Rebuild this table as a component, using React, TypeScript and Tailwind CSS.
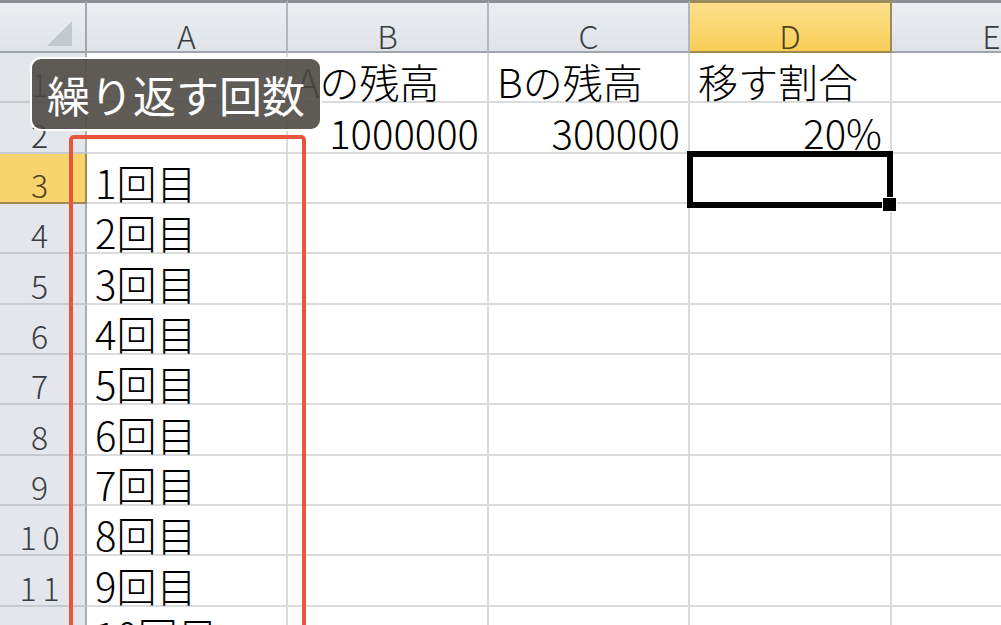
import React from "react";

const COLS = ["A", "B", "C", "D", "E"];

type Cell = { text: string; right?: boolean };

const rows: Cell[][] = [
  [{ text: "" }, { text: "Aの残高" }, { text: "Bの残高" }, { text: "移す割合" }, { text: "" }],
  [{ text: "" }, { text: "1000000", right: true }, { text: "300000", right: true }, { text: "20%", right: true }, { text: "" }],
  ...Array.from({ length: 10 }, (_, i) => [
    { text: `${i + 1}回目` },
    { text: "" },
    { text: "" },
    { text: "" },
    { text: "" },
  ]),
];

const font = { fontFamily: '"Noto Sans CJK JP", "Noto Sans", sans-serif' };

export default function App() {
  return (
    <div className="relative w-[1001px] h-[625px] overflow-hidden bg-white" style={font}>
      <div className="grid w-max grid-cols-[87px_201px_201px_201px_202px_201px] grid-rows-[53px_repeat(12,50.33px)]">
        {/* ── corner ── */}
        <div className="relative border-t-[3px] border-[#8c8f93] border-b-2 border-b-[#9ea4ab] border-r-2 border-r-[#a3a8ae] bg-gradient-to-b from-[#eceef1] to-[#dfe3e8]">
          <svg className="absolute left-[47px] top-[18px]" width="26" height="25" viewBox="0 0 26 25">
            <polygon points="25,0 25,25 0,25" fill="#c3c8ce" />
          </svg>
        </div>

        {/* ── column headers ── */}
        {COLS.map((c) => {
          const sel = c === "D";
          return (
            <div
              key={c}
              className={`flex items-end justify-center border-t-[3px] border-b-2 border-r-2 text-[32px] leading-none ${
                sel
                  ? "border-t-[#9a8a5e] border-b-[#a08a52] border-r-[#9b8b5c] bg-gradient-to-b from-[#fde18c] to-[#f9cd55] text-[#4d4120]"
                  : "border-t-[#8c8f93] border-b-[#9ea4ab] border-r-[#b2b7bd] bg-gradient-to-b from-[#eceef1] to-[#dfe3e8] text-[#3a3d40]"
              }`}
            >
              <span className="font-light">{c}</span>
            </div>
          );
        })}

        {/* ── body rows ── */}
        {rows.map((row, ri) => {
          const n = ri + 1;
          const sel = n === 3;
          return (
            <React.Fragment key={n}>
              <div
                className={`flex items-end justify-center pr-[6px] pb-[2px] border-b-2 border-r-2 text-[32px] leading-none ${
                  sel
                    ? "border-b-[#a08a52] border-r-[#a08a52] bg-[#f9d36c] text-[#4d4120]"
                    : "border-b-[#c6cacf] border-r-[#a9aeb4] bg-[#e3e6ea] text-[#3a3d40]"
                }`}
              >
                <span className="font-light tracking-[6px] -mr-[6px]">{n}</span>
              </div>
              {row.map((cell, ci) => (
                <div
                  key={ci}
                  className={`relative flex items-end border-b-2 border-r-2 border-[#dadbdc] text-[40px] leading-none text-black whitespace-nowrap ${
                    cell.right ? "justify-end pr-[8px]" : "pl-[8px]"
                  }`}
                >
                  <span className="font-light">{cell.text}</span>
                  {n === 3 && ci === 3 && (
                    <div className="absolute z-10 -left-[3px] -top-[3px] w-[206px] h-[57px] border-[6px] border-black">
                      <div className="absolute -right-[10px] -bottom-[10px] w-[15px] h-[15px] bg-black border border-white" />
                    </div>
                  )}
                </div>
              ))}
            </React.Fragment>
          );
        })}
      </div>

      {/* red highlight around column A */}
      <div className="absolute left-[69px] top-[135px] w-[237px] h-[540px] border-4 border-[#e8553c] rounded-[5px]" />

      {/* callout */}
      <div className="absolute left-[30px] top-[57px] w-[292px] h-[74px] rounded-[11px] border-2 border-white bg-[#4e4945]/90 flex items-center justify-center">
        <span className="text-white text-[43px] leading-none">繰り返す回数</span>
      </div>
    </div>
  );
}
